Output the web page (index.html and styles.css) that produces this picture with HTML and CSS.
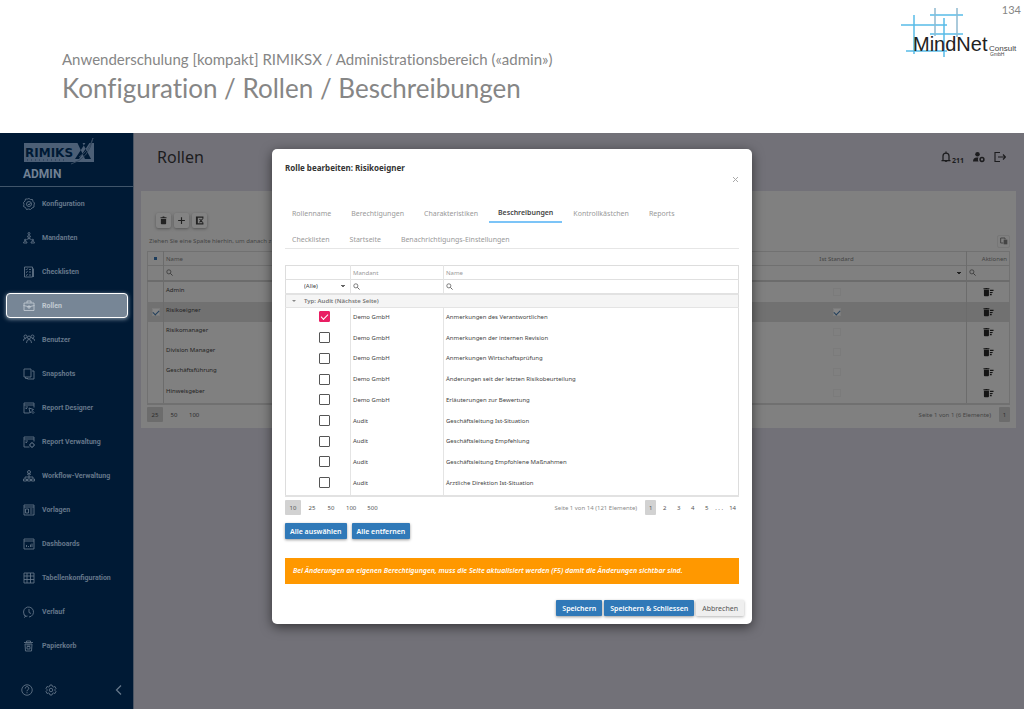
FILE: index.html
```html
<!DOCTYPE html>
<html lang="de">
<head>
<meta charset="utf-8">
<meta name="viewport" content="width=device-width, initial-scale=1">
<title>Konfiguration / Rollen / Beschreibungen</title>
<link rel="stylesheet" href="styles.css">
</head>
<body>
<svg class="defs" aria-hidden="true">
  <symbol id="search" viewBox="0 0 16 16"><circle cx="6.5" cy="6.5" r="4.7" fill="none" stroke="currentColor" stroke-width="1.7"/><path d="M10 10l5 5" stroke="currentColor" stroke-width="2"/></symbol>
  <symbol id="trash" viewBox="0 0 24 24"><path d="M5 8h14v12a2 2 0 0 1-2 2H7a2 2 0 0 1-2-2zM4 3h5l1-2h4l1 2h5v3H4z" fill="currentColor"/></symbol>
  <symbol id="trash-list" viewBox="0 0 24 20"><path d="M2 5h11v12a2 2 0 0 1-2 2H4a2 2 0 0 1-2-2zM1 2h4l1-1h3l1 1h4v2H1zM15 5h8v3h-8zM15 10h6v2h-6zM15 14h4v3h-4z" fill="currentColor"/></symbol>
</svg>

<header class="slide-head">
  <div class="titles">
    <p class="subtitle">Anwenderschulung [kompakt] RIMIKSX / Administrationsbereich («admin»)</p>
    <h1 class="title">Konfiguration / Rollen / Beschreibungen</h1>
  </div>
  <svg class="mindnet" width="118" height="52" viewBox="0 0 118 52" role="img" aria-label="MindNet Consult GmbH">
    <g stroke="#58bce8" stroke-width="1.5" fill="none"><path d="M14 7v39M44 10v39M1 17h46M30 7h33M30 26h33M6 43h41"/><path d="M35 0v28M57 0v29" stroke="#8fb9cf"/></g>
    <text class="logo-main" x="13" y="43">MindNet</text>
    <text class="logo-sub" x="89" y="43">Consult</text>
    <text class="logo-tiny" x="90" y="48">GmbH</text>
  </svg>
  <span class="page-no">134</span>
</header>

<div class="app">
  <nav class="sidebar">
    <div class="brand">
      <svg class="rimiksx" width="74" height="30" viewBox="0 0 74 30" role="img" aria-label="RIMIKSX Software">
        <rect x="1" y="7" width="70" height="19" fill="#4c5f76"/>
        <text class="rimiks-text" x="2" y="21">RIMIKS</text>
        <path d="M54 6h5l9 17h-6zM69 3h-4L52 23h4z" fill="#001a35"/>
        <path d="M48 28q18-5 22-26-4 13-14 19" fill="none" stroke="#34485f" stroke-width="1"/>
        <path d="M4 24h38" stroke="#1c3550" stroke-width="1" stroke-dasharray="1 3"/>
      </svg>
      <strong class="brand-name">ADMIN</strong>
    </div>
    <div class="menu">
      <a class="item" href="#"><svg class="ico" viewBox="0 0 24 24"><path d="M12 1l3 2 4 0 1 4 3 3-1 4 0 4-4 2-3 3-4-1-4 1-2-4-4-2 1-4-1-4 3-3 1-4 4 0z"/><circle cx="12" cy="12" r="5"/><path d="M10 12l2 2 3-4"/></svg>Konfiguration</a>
      <a class="item" href="#"><svg class="ico" viewBox="0 0 24 24"><circle cx="12" cy="3" r="2"/><path d="M9 10c0-5 6-5 6 0zM12 10v4M7 15l5-2 5 2M1 22c0-5 7-5 7 0zM16 22c0-5 7-5 7 0z"/><circle cx="4.500" cy="16" r="1.500"/><circle cx="19.500" cy="16" r="1.500"/></svg>Mandanten</a>
      <a class="item" href="#"><svg class="ico" viewBox="0 0 24 24"><path d="M3 2h16v20H3zM21 5v17M6 7l1 1 2-3M12 7h4M6 12l1 1 2-3M12 12h4M6 18l1 1 2-3M12 18h4"/></svg>Checklisten</a>
      <a class="item active" href="#" aria-current="page"><svg class="ico" viewBox="0 0 24 24"><path d="M2 6h20v15H2zM8 6V2h8v4M1 11q11 5 22 0M10 12h4v4h-4z"/></svg>Rollen</a>
      <a class="item" href="#"><svg class="ico" viewBox="0 0 24 24"><circle cx="5" cy="5" r="3"/><circle cx="12" cy="7" r="3"/><circle cx="19" cy="5" r="3"/><path d="M0 14q1-6 6-5M7 18q0-7 5-7t5 7M18 9q5-1 6 5"/></svg>Benutzer</a>
      <a class="item" href="#"><svg class="ico" viewBox="0 0 24 24"><path d="M2 2h14v16H2zM18 6h4v16H9v-2M5 18v3h4"/></svg>Snapshots</a>
      <a class="item" href="#"><svg class="ico" viewBox="0 0 24 24"><path d="M22 11V2H2v20h11M2 6h20M5 10h5M5 13h3M12 12l9 3-3 2 4 4-2 2-4-4-2 3z"/></svg>Report Designer</a>
      <a class="item" href="#"><svg class="ico" viewBox="0 0 24 24"><path d="M22 11V2H2v20h11M2 6h20M5 10h5M5 13h3"/><circle cx="18" cy="18" r="4"/><path d="M18 12v2M24 18h-2M18 24v-2M12 18h2"/></svg>Report Verwaltung</a>
      <a class="item" href="#"><svg class="ico" viewBox="0 0 24 24"><circle cx="12" cy="4" r="3"/><path d="M8 9q4-4 8 0M12 8v9M4 17v-3h16v3M1 22v-4h6v4zM9 22v-4h6v4zM17 22v-4h6v4z"/></svg>Workflow-Verwaltung</a>
      <a class="item" href="#"><svg class="ico" viewBox="0 0 24 24"><path d="M2 2h20v20H2zM2 6h20M5 10h6v8H5zM14 10h5M14 14h5M14 18h5"/></svg>Vorlagen</a>
      <a class="item" href="#"><svg class="ico" viewBox="0 0 24 24"><path d="M2 2h20v20H2zM2 6h20M7 18v-4M11 18v-2M15 18v-5M18 18v-7"/></svg>Dashboards</a>
      <a class="item" href="#"><svg class="ico" viewBox="0 0 24 24"><path d="M2 2h20v20H2zM2 8h20M2 15h20M8 2v20M15 2v20"/></svg>Tabellenkonfiguration</a>
      <a class="item" href="#"><svg class="ico" viewBox="0 0 24 24"><path d="M5 20A10 10 0 1 1 12 22M12 6v7l4 2M2 17l3 4-3 2M5 21l4-1"/></svg>Verlauf</a>
      <a class="item" href="#"><svg class="ico" viewBox="0 0 24 24"><path d="M2 5h18M7 5V2h8v3M4 8l1 14h12l1-14zM7 10h8M8 13h6v5H8z"/></svg>Papierkorb</a>
    </div>
    <div class="side-foot">
      <button class="plain" aria-label="Hilfe"><svg class="ico" viewBox="0 0 24 24"><circle cx="12" cy="12" r="10.500"/><path d="M8.500 9c0-5 7-5 7 0 0 3-3.500 2-3.500 5.500M12 16.500v2" stroke-width="2"/></svg></button>
      <button class="plain" aria-label="Einstellungen"><svg class="ico" viewBox="0 0 24 24"><path d="M10 2h4l1 3 2 1 3-1 2 4-2 2v2l2 2-2 4-3-1-2 1-1 3h-4l-1-3-2-1-3 1-2-4 2-2v-2L2 9l2-4 3 1 2-1z"/><circle cx="12" cy="12" r="3.500"/></svg></button>
      <button class="plain collapse" aria-label="Menü einklappen"><svg class="ico" viewBox="0 0 24 24"><path d="M16 3l-9 9 9 9" stroke-width="2.500"/></svg></button>
    </div>
  </nav>

  <main class="main">
    <div class="topbar">
      <h2 class="page-title">Rollen</h2>
      <div class="top-icons">
        <button class="plain bell" aria-label="211 Benachrichtigungen"><svg class="top-ico" viewBox="0 0 24 24"><path d="M3 19h18M6 19V10c0-8 12-8 12 0v9M12 1v3" fill="none" stroke="currentColor" stroke-width="2.500"/><path d="M9 20h6q-3 4-6 0z" fill="currentColor"/></svg><span class="count">211</span></button>
        <button class="plain" aria-label="Konto"><svg class="top-ico" viewBox="0 0 24 24"><circle cx="9" cy="6.500" r="4.500" fill="currentColor"/><path d="M0 21c0-7 4-9 11-8-2 3-1 6 0 8z" fill="currentColor"/><circle cx="18" cy="17" r="3.800" fill="none" stroke="currentColor" stroke-width="3"/></svg></button>
        <button class="plain" aria-label="Abmelden"><svg class="top-ico" viewBox="0 0 24 24"><path d="M12 3H2v18h10M8 12h14M18 7l5 5-5 5" fill="none" stroke="currentColor" stroke-width="2.300"/></svg></button>
      </div>
    </div>

    <section class="panel">
      <div class="tools">
        <button class="tool" aria-label="Löschen"><svg class="tool-ico"><use href="#trash"/></svg></button>
        <button class="tool" aria-label="Hinzufügen"><svg class="tool-ico" viewBox="0 0 24 24"><path d="M12 3v18M3 12h18" stroke="currentColor" stroke-width="3"/></svg></button>
        <button class="tool" aria-label="Exportieren"><svg class="tool-ico" viewBox="0 0 24 24"><path d="M21 7V3H4v18h17v-4M6 3v18M12 8l8 9M20 8l-8 9" fill="none" stroke="currentColor" stroke-width="3"/></svg></button>
      </div>
      <div class="hint-row">
        <span>Ziehen Sie eine Spalte hierhin, um danach z</span>
        <button class="chooser" aria-label="Spaltenauswahl"><svg class="mini" viewBox="0 0 24 24"><path d="M10 18H2V3h13v4" fill="none" stroke="currentColor" stroke-width="3"/><path d="M11 8h11v14H11z" fill="currentColor"/></svg></button>
      </div>
      <table class="grid roles">
        <colgroup><col class="c-check"><col><col class="c-standard"><col class="c-action"></colgroup>
        <thead>
          <tr class="g-head"><th><span class="partial"></span></th><th>Name</th><th class="mid">Ist Standard</th><th class="end">Aktionen</th></tr>
          <tr class="g-filter"><td></td><td><label class="find"><svg class="lens"><use href="#search"/></svg><input type="text" aria-label="Name filtern"></label></td><td><select class="pick" aria-label="Ist Standard filtern"><option></option></select></td><td><label class="find"><svg class="lens"><use href="#search"/></svg><input type="text" aria-label="Aktionen filtern"></label></td></tr>
        </thead>
        <tbody>
          <tr><td></td><td>Admin</td><td class="mid"><input class="dim-box" type="checkbox" aria-label="Admin ist Standard"></td><td class="act"><svg class="row-ico"><use href="#trash-list"/></svg></td></tr>
          <tr class="chosen"><td class="mid"><input class="dim-box" type="checkbox" checked aria-label="Risikoeigner auswählen"></td><td>Risikoeigner</td><td class="mid"><input class="dim-box" type="checkbox" checked aria-label="Risikoeigner ist Standard"></td><td class="act"><svg class="row-ico"><use href="#trash-list"/></svg></td></tr>
          <tr><td></td><td>Risikomanager</td><td class="mid"><input class="dim-box" type="checkbox" aria-label="Risikomanager ist Standard"></td><td class="act"><svg class="row-ico"><use href="#trash-list"/></svg></td></tr>
          <tr><td></td><td>Division Manager</td><td class="mid"><input class="dim-box" type="checkbox" aria-label="Division Manager ist Standard"></td><td class="act"><svg class="row-ico"><use href="#trash-list"/></svg></td></tr>
          <tr><td></td><td>Geschäftsführung</td><td class="mid"><input class="dim-box" type="checkbox" aria-label="Geschäftsführung ist Standard"></td><td class="act"><svg class="row-ico"><use href="#trash-list"/></svg></td></tr>
          <tr><td></td><td>Hinweisgeber</td><td class="mid"><input class="dim-box" type="checkbox" aria-label="Hinweisgeber ist Standard"></td><td class="act"><svg class="row-ico"><use href="#trash-list"/></svg></td></tr>
        </tbody>
      </table>
      <div class="pager dim">
        <button class="size on">25</button><button class="size">50</button><button class="size">100</button>
        <span class="info">Seite 1 von 1 (6 Elemente)</span><button class="pg on">1</button>
      </div>
    </section>
  </main>

  <div class="overlay">
    <div class="dialog" role="dialog" aria-labelledby="dlg-title">
      <h3 class="dlg-title" id="dlg-title">Rolle bearbeiten: Risikoeigner</h3>
      <button class="plain close" aria-label="Schliessen"><svg class="cross" viewBox="0 0 5 5"><path d="M0 0l5 5M5 0L0 5" stroke="#aaa" stroke-width="1"/></svg></button>
      <div class="tabs">
        <div class="tab-row"><button class="tab">Rollenname</button><button class="tab">Berechtigungen</button><button class="tab">Charakteristiken</button><button class="tab current">Beschreibungen</button><button class="tab">Kontrollkästchen</button><button class="tab">Reports</button></div>
        <div class="tab-row"><button class="tab">Checklisten</button><button class="tab">Startseite</button><button class="tab">Benachrichtigungs-Einstellungen</button></div>
      </div>
      <table class="grid descr">
        <colgroup><col class="c-pick"><col class="c-client"><col></colgroup>
        <thead>
          <tr class="g-head"><th></th><th>Mandant</th><th>Name</th></tr>
          <tr class="g-filter"><td><select class="pick" aria-label="Auswahl filtern"><option>(Alle)</option></select></td><td><label class="find"><svg class="lens"><use href="#search"/></svg><input type="text" aria-label="Mandant filtern"></label></td><td><label class="find"><svg class="lens"><use href="#search"/></svg><input type="text" aria-label="Name filtern"></label></td></tr>
        </thead>
        <tbody>
          <tr class="group"><td colspan="3"><span class="caret"></span>Typ: Audit (Nächste Seite)</td></tr>
          <tr><td><input class="box" type="checkbox" id="d1" checked></td><td>Demo GmbH</td><td><label for="d1">Anmerkungen des Verantwortlichen</label></td></tr>
          <tr><td><input class="box" type="checkbox" id="d2"></td><td>Demo GmbH</td><td><label for="d2">Anmerkungen der internen Revision</label></td></tr>
          <tr><td><input class="box" type="checkbox" id="d3"></td><td>Demo GmbH</td><td><label for="d3">Anmerkungen Wirtschaftsprüfung</label></td></tr>
          <tr><td><input class="box" type="checkbox" id="d4"></td><td>Demo GmbH</td><td><label for="d4">Änderungen seit der letzten Risikobeurteilung</label></td></tr>
          <tr><td><input class="box" type="checkbox" id="d5"></td><td>Demo GmbH</td><td><label for="d5">Erläuterungen zur Bewertung</label></td></tr>
          <tr><td><input class="box" type="checkbox" id="d6"></td><td>Audit</td><td><label for="d6">Geschäftsleitung Ist-Situation</label></td></tr>
          <tr><td><input class="box" type="checkbox" id="d7"></td><td>Audit</td><td><label for="d7">Geschäftsleitung Empfehlung</label></td></tr>
          <tr><td><input class="box" type="checkbox" id="d8"></td><td>Audit</td><td><label for="d8">Geschäftsleitung Empfohlene Maßnahmen</label></td></tr>
          <tr><td><input class="box" type="checkbox" id="d9"></td><td>Audit</td><td><label for="d9">Ärztliche Direktion Ist-Situation</label></td></tr>
        </tbody>
      </table>
      <div class="pager">
        <button class="size on">10</button><button class="size">25</button><button class="size">50</button><button class="size">100</button><button class="size">500</button>
        <span class="info">Seite 1 von 14 (121 Elemente)</span><button class="pg on">1</button><button class="pg">2</button><button class="pg">3</button><button class="pg">4</button><button class="pg">5</button><span class="dots">. . .</span><button class="pg">14</button>
      </div>
      <div class="row-btns"><button class="btn">Alle auswählen</button><button class="btn">Alle entfernen</button></div>
      <p class="alert">Bei Änderungen an eigenen Berechtigungen, muss die Seite aktualisiert werden (F5) damit die Änderungen sichtbar sind.</p>
      <div class="dlg-foot"><button class="btn">Speichern</button><button class="btn">Speichern &amp; Schliessen</button><button class="btn light">Abbrechen</button></div>
    </div>
  </div>
</div>
</body>
</html>
```
FILE: styles.css
```css
* { box-sizing: border-box; }
body { margin: 0; min-height: 100vh; display: flex; flex-direction: column; background: #fff; font-family: "Noto Sans", "Open Sans", sans-serif; font-size: 6px; color: #444; }
button, input, select { font: inherit; color: inherit; margin: 0; padding: 0; border: 0; background: none; border-radius: 0; }
h1, h2, h3, p { margin: 0; font-weight: 400; }
.defs { position: absolute; width: 0; height: 0; }

.slide-head { display: flex; height: 133px; padding: 0 3px 0 62px; font-family: Lato, "Open Sans", sans-serif; font-variant-ligatures: none; color: #868686; }
.titles { flex: 1; padding-top: 50px; }
.subtitle { font-size: 15px; line-height: 18px; }
.title { font-size: 26px; line-height: 40px; }
.mindnet { margin-top: 8px; margin-right: -16px; }
.logo-main { font: 20px "Liberation Sans", sans-serif; fill: #222; }
.logo-sub { font: 8px "Liberation Sans", sans-serif; fill: #444; }
.logo-tiny { font: 5px "Liberation Sans", sans-serif; fill: #444; }
.page-no { font-size: 11px; line-height: 20px; }

.app { position: relative; flex: 1; display: flex; background: #727178; }
.sidebar { width: 134px; display: flex; flex-direction: column; background: #001a35; border-right: 1px solid #4b5563; color: #65778a; font-family: Roboto, sans-serif; }
.brand { height: 54px; padding: 3px 0 0 23px; border-bottom: 1px solid #40556a; display: flex; flex-direction: column; }
.rimiks-text { font: 700 12px "DejaVu Sans", sans-serif; fill: #001a35; }
.brand-name { font-size: 12px; line-height: 16px; color: #718194; }
.menu { display: flex; flex-direction: column; padding: 4px 5px 0 6px; gap: 9px; }
.item { display: flex; align-items: center; gap: 7px; height: 25px; padding-left: 16px; border: 1px solid transparent; border-radius: 4px; color: inherit; text-decoration: none; font-size: 7px; font-weight: 700; }
.active { background: #778696; border-color: #fff; color: #c2cad2; box-shadow: 0 1px 4px #8fa0b0; }
.ico { width: 12px; height: 12px; flex: none; fill: none; stroke: currentColor; stroke-width: 1.7; display: block; }
.side-foot { margin-top: auto; padding: 0 8px 13px 21px; display: flex; gap: 12px; }
.collapse { margin-left: auto; }

.main { flex: 1; min-width: 0; padding: 0 8px 0 7px; }
.topbar { height: 58px; padding: 0 10px 10px 16px; display: flex; align-items: center; justify-content: space-between; color: #1c1c1e; }
.page-title { font-size: 16px; line-height: 24px; }
.top-icons { display: flex; gap: 9px; align-items: center; }
.top-ico { width: 12px; height: 12px; display: block; }
.count { font-size: 7px; font-weight: 700; line-height: 4px; }

.panel { background: #808080; padding: 22px 6px 6px; color: #222; }
.tools { display: flex; gap: 3px; padding-left: 9px; }
.tool { width: 15px; height: 15px; display: grid; place-items: center; border-radius: 2px; background: #838383; box-shadow: 0 1px 3px #555; }
.tool-ico { width: 9px; height: 9px; }
.hint-row { display: flex; justify-content: space-between; align-items: center; height: 23px; padding: 3px 0 0 2px; color: #444; }
.chooser { width: 13px; height: 13px; display: grid; place-items: center; border: 1px solid #777; border-radius: 2px; }
.mini { width: 8px; height: 8px; }

.grid { width: 100%; table-layout: fixed; border-collapse: collapse; line-height: 8px; }
.grid th, .grid td { padding: 0 2px; text-align: left; font-weight: 400; vertical-align: middle; }
.grid th + th, .grid td + td { border-left: 1px solid #e4e4e4; }
.descr { border: 1px solid #ddd; border-bottom: 2px solid #e2e2e2; height: 232px; }
.g-head { height: 14px; border-bottom: 1px solid #e0e0e0; color: #999; }
.g-filter { height: 14px; border-bottom: 2px solid #e2e2e2; }
.group { height: 14px; background: #f5f5f5; border-bottom: 1px solid #e4e4e4; color: #777; }
.grid .group td { padding: 0 0 0 6px; font-weight: 600; }
.descr tbody td { padding-bottom: 3px; }
.caret { display: inline-block; margin-right: 8px; border: 2px solid transparent; border-top-color: #888; border-bottom: 0; vertical-align: middle; }
.find { display: flex; align-items: center; color: #555; }
.find input { flex: 1; min-width: 0; height: 8px; }
.lens { width: 7px; height: 7px; flex: none; }
.pick { display: block; width: 100%; height: 10px; padding-left: 16px; appearance: none; background-image: linear-gradient(#666, #666), linear-gradient(#666, #666); background-size: 4px 1px, 2px 1px; background-position: right 3px top 4px, right 4px top 5px; background-repeat: no-repeat; }
.c-pick { width: 65px; }
.c-client { width: 93px; }
.box { display: block; width: 11px; height: 11px; appearance: none; border: 1px solid #555; border-radius: 1px; background: #fff; }
.descr .box { margin-left: 31px; }
.box:checked { border-color: #e91e63; background: #e91e63; display: grid; place-items: center; }
.box:checked::after, .dim-box:checked::after { content: ""; width: 6px; height: 3px; border: solid #fff; border-width: 0 0 1px 1px; rotate: -45deg; margin-bottom: 2px; }

.roles { border: 1px solid #717171; border-bottom: 2px solid #707070; height: 154px; }
.roles th + th, .roles td + td { border-left-color: #6c6c6c; }
.roles .g-head { border-bottom-color: #707070; color: #444; }
.roles .g-filter { height: 15px; border-bottom-color: #6c6c6c; }
.roles .find { color: #333; }
.roles .pick { background-image: linear-gradient(#222, #222), linear-gradient(#222, #222); }
.c-check { width: 16px; }
.c-standard { width: 260px; }
.c-action { width: 43px; }
.roles tbody td + td { border-left-color: transparent; }
.roles tbody td:nth-child(2), .roles tbody td:last-child { border-left-color: #6c6c6c; }
.roles tbody td:nth-child(2) { padding-bottom: 4px; }
.grid .mid { text-align: center; }
.grid .end { text-align: right; }
.grid .act { text-align: center; }
.row-ico { width: 11px; height: 10px; display: block; margin: 0 auto; color: #151515; }
.chosen { background: #717171; }
.dim-box { display: block; appearance: none; width: 8px; height: 8px; margin: 0 auto; border: 1px solid #7b7b7b; }
.dim-box:checked { display: grid; place-items: center; background: #858585; }
.dim-box:checked::after { width: 5px; height: 3px; border-color: #24405c; margin-bottom: 1px; }
.partial { display: block; width: 3px; height: 3px; background: #1c3c5c; margin: 0 auto; }

.pager { display: flex; align-items: center; gap: 3px; margin-top: 3px; height: 15px; color: #555; }
.dim { margin-top: 2px; color: #2c2c2c; }
.size { height: 15px; padding: 0 4px; min-width: 16px; }
.pg { height: 15px; min-width: 11px; padding: 0 3px; }
.on { background: #d2d2d2; border-radius: 1px; }
.dim .on { background: #6c6c6c; }
.info { margin-left: auto; margin-right: 5px; color: #8a8a8a; }
.dim .info { color: #454545; }

.overlay { position: absolute; inset: 16px 0 auto; display: flex; justify-content: center; }
.dialog { position: relative; width: 480px; padding: 13px 13px 8px; border-radius: 5px; background: #fff; box-shadow: 0 3px 12px rgba(0, 0, 0, .55); }
.dlg-title { font-size: 8px; line-height: 12px; font-weight: 700; color: #333; }
.plain { display: block; cursor: pointer; }
.bell { display: flex; align-items: end; }
.close { margin: 2px 0 1px auto; padding: 0 1px; height: 6px; }
.cross { display: block; width: 5px; height: 5px; }
.tabs { margin-top: 17px; border-bottom: 1px solid #e6e6e6; }
.tab-row { display: flex; gap: 2px; height: 26px; margin-left: -2px; }
.tab-row + .tab-row { height: 23px; }
.tab { height: 26px; padding: 2px 9px 0; font-size: 7px; color: #999; }
.tab-row .current { height: 24px; padding-top: 4px; border-bottom: 2px solid #7cc4f7; color: #444; font-weight: 600; }
.descr { margin-top: 16px; }
.row-btns { display: flex; gap: 5px; margin-top: 8px; }
.btn { height: 16px; padding: 0 5px; font-size: 7px; font-weight: 600; color: #fff; background: #3079b8; border-radius: 1px; box-shadow: 0 1px 3px rgba(0, 0, 0, .4); }
.dlg-foot .btn { padding: 0 6px; }
.btn.light { background: #efefef; color: #555; font-weight: 400; box-shadow: 0 1px 3px rgba(0, 0, 0, .3); }
.alert { margin-top: 19px; padding: 8px; background: #ff9800; color: #fff; font-size: 7px; line-height: 10px; font-weight: 600; font-style: italic; }
.dlg-foot { display: flex; justify-content: flex-end; gap: 2px; margin: 16px -5px 0 0; }
```
